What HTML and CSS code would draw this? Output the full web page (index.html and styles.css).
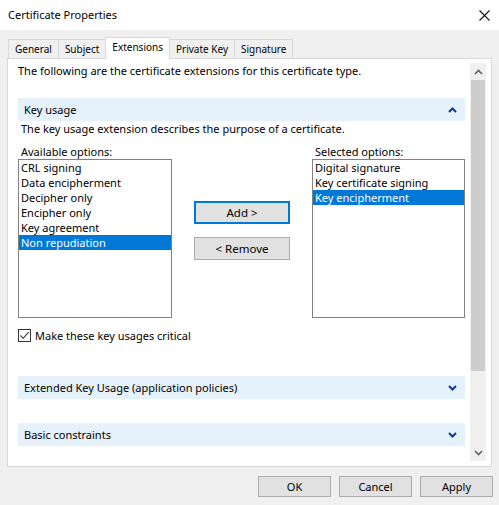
FILE: index.html
```html
<!DOCTYPE html>
<html>
<head>
<meta charset="utf-8">
<link rel="stylesheet" href="styles.css">
</head>
<body>
<div class="window">
  <div class="titlebar">
    <span class="title">Certificate Properties</span>
    <svg class="close" width="11" height="11" viewBox="0 0 11 11"><path d="M0.5 0.5 L10.5 10.5 M10.5 0.5 L0.5 10.5" stroke="#1a1a1a" stroke-width="1.1" fill="none"/></svg>
  </div>
  <div class="tabs">
    <div class="tab">General</div>
    <div class="tab">Subject</div>
    <div class="tab active">Extensions</div>
    <div class="tab">Private Key</div>
    <div class="tab">Signature</div>
  </div>
  <div class="panel">
    <div class="content">
      <p class="intro">The following are the certificate extensions for this certificate type.</p>
      <div class="section-header">
        <span>Key usage</span>
        <svg class="chev" width="9" height="6" viewBox="0 0 9 6"><path d="M1 5 L4.5 1.5 L8 5" stroke="#0b3a9c" stroke-width="2" fill="none"/></svg>
      </div>
      <p class="desc">The key usage extension describes the purpose of a certificate.</p>
      <div class="picker">
        <div class="col">
          <div class="label">Available options:</div>
          <ul class="listbox">
            <li>CRL signing</li>
            <li>Data encipherment</li>
            <li>Decipher only</li>
            <li>Encipher only</li>
            <li>Key agreement</li>
            <li class="sel">Non repudiation</li>
          </ul>
        </div>
        <div class="mid">
          <button class="btn focused">Add &gt;</button>
          <button class="btn">&lt; Remove</button>
        </div>
        <div class="col">
          <div class="label">Selected options:</div>
          <ul class="listbox">
            <li>Digital signature</li>
            <li>Key certificate signing</li>
            <li class="sel">Key encipherment</li>
          </ul>
        </div>
      </div>
      <div class="check">
        <span class="box"><svg width="11" height="11" viewBox="0 0 11 11"><path d="M1.5 5.5 L4.2 8.3 L9.6 2.2" stroke="#333" stroke-width="1.1" fill="none"/></svg></span>
        <span class="check-label">Make these key usages critical</span>
      </div>
      <div class="section-header ext">
        <span>Extended Key Usage (application policies)</span>
        <svg class="chev" width="9" height="6" viewBox="0 0 9 6"><path d="M1 1 L4.5 4.5 L8 1" stroke="#0b3a9c" stroke-width="2" fill="none"/></svg>
      </div>
      <div class="section-header basic">
        <span>Basic constraints</span>
        <svg class="chev" width="9" height="6" viewBox="0 0 9 6"><path d="M1 1 L4.5 4.5 L8 1" stroke="#0b3a9c" stroke-width="2" fill="none"/></svg>
      </div>
    </div>
    <div class="scrollbar">
      <div class="sb-arrow"><svg width="9" height="6" viewBox="0 0 9 6"><path d="M1 5 L4.5 1.5 L8 5" stroke="#606060" stroke-width="1.6" fill="none"/></svg></div>
      <div class="sb-thumb"></div>
      <div class="sb-track"></div>
      <div class="sb-arrow"><svg width="9" height="6" viewBox="0 0 9 6"><path d="M1 1 L4.5 4.5 L8 1" stroke="#606060" stroke-width="1.6" fill="none"/></svg></div>
    </div>
  </div>
  <div class="footer">
    <button class="btn dlg">OK</button>
    <button class="btn dlg">Cancel</button>
    <button class="btn dlg">Apply</button>
  </div>
</div>
</body>
</html>
```
FILE: styles.css
```css
* { box-sizing: border-box; }
html, body { margin: 0; padding: 0; }
body {
  width: 499px;
  height: 505px;
  background: #f0f0f0;
  font-family: "Noto Sans", "Open Sans", sans-serif;
  font-size: 11px;
  color: #000;
  overflow: hidden;
}
.window { width: 499px; height: 505px; }
.titlebar {
  height: 30px;
  background: #fff;
  display: flex;
  align-items: center;
  justify-content: space-between;
  padding: 0 9px 0 8px;
}
.title { font-size: 11px; line-height: 16px; }
.close { display: block; }

.tabs {
  display: flex;
  align-items: flex-end;
  height: 28px;
  padding: 7px 0 0 8px;
}
.tab {
  height: 19px;
  line-height: 18px;
  padding: 0 6px;
  font-size: 10px;
  border: 1px solid #d9d9d9;
  border-bottom: none;
  margin-left: -1px;
  background: #f0f0f0;
  white-space: nowrap;
}
.tab:first-child { margin-left: 0; }
.tab.active {
  height: 22px;
  line-height: 19px;
  background: #fff;
  position: relative;
  z-index: 1;
  margin-bottom: -1px;
}

.panel {
  margin: 0 7px;
  height: 409px;
  border: 1px solid #d9d9d9;
  background: #fff;
  display: flex;
}
.content {
  flex: 1;
  padding: 4px 5px 0 10px;
}
.intro { margin: 0; line-height: 16px; }

.section-header {
  height: 23px;
  margin-top: 19px;
  background: #e5f1fb;
  display: flex;
  align-items: center;
  justify-content: space-between;
  padding: 0 8px 0 6px;
}
.chev { display: block; }
.desc { margin: 0; line-height: 16px; padding-left: 3px; }

.picker {
  display: grid;
  grid-template-columns: 154px 1fr 153px;
  margin-top: 7px;
}
.label { line-height: 15px; padding-left: 3px; }
.listbox {
  list-style: none;
  margin: 0;
  padding: 0;
  height: 159px;
  border: 1px solid #828282;
}
.listbox li {
  height: 15px;
  line-height: 15px;
  padding-left: 2px;
  white-space: nowrap;
}
.listbox li.sel { background: #0078d7; color: #fff; }

.mid {
  display: flex;
  flex-direction: column;
  align-items: center;
  padding-top: 57px;
  gap: 13px;
}
.btn {
  font-family: inherit;
  font-size: 11.5px;
  color: #000;
  background: #e1e1e1;
  border: 1px solid #adadad;
  padding: 0;
  margin: 0;
  width: 96px;
  height: 23px;
}
.btn.focused { border: 2px solid #0078d7; }

.check {
  display: flex;
  align-items: center;
  margin-top: 11px;
  height: 13px;
}
.box {
  width: 13px;
  height: 13px;
  border: 1px solid #333;
  display: flex;
  align-items: center;
  justify-content: center;
  margin-right: 4px;
}
.box svg { display: block; }
.check-label { line-height: 13px; }

.section-header.ext { margin-top: 34px; }
.section-header.basic { margin-top: 24px; }

.scrollbar {
  width: 16px;
  margin: 4px 5px 5px 0;
  background: #f0f0f0;
  display: flex;
  flex-direction: column;
}
.sb-arrow {
  height: 17px;
  display: flex;
  align-items: center;
  justify-content: center;
}
.sb-thumb { height: 291px; background: #cdcdcd; margin: 0 1px; }
.sb-track { flex: 1; }

.footer {
  display: flex;
  justify-content: flex-end;
  gap: 8px;
  padding: 9px 6px 0 0;
}
.btn.dlg { width: 73px; height: 21px; font-size: 11px; }
```
